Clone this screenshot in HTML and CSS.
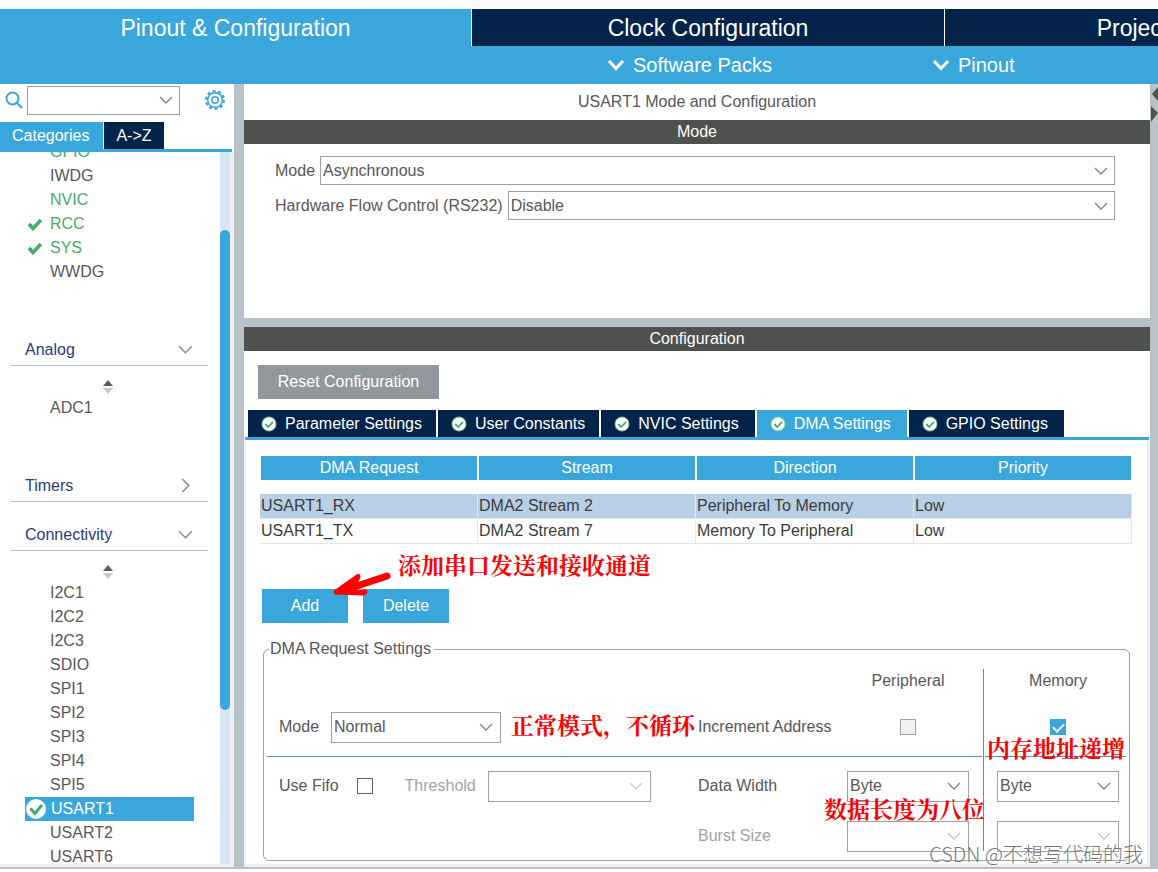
FILE: index.html
```html
<!DOCTYPE html>
<html lang="en">
<head>
<meta charset="utf-8">
<title>Pinout &amp; Configuration</title>
<link rel="stylesheet" href="styles.css">
</head>
<body>
<svg class="defs" aria-hidden="true">
  <symbol id="chev" viewBox="0 0 14 8"><path d="M1 1l6 6 6-6" fill="none" stroke="currentColor" stroke-width="1.4"/></symbol>
  <symbol id="chev-bold" viewBox="0 0 18 12"><path d="M2 2l7 7.500 7-7.500" fill="none" stroke="currentColor" stroke-width="3"/></symbol>
  <symbol id="tick" viewBox="0 0 16 14"><path d="M2 7l4 4.500L14 3" fill="none" stroke="currentColor" stroke-width="3.600"/></symbol>
  <symbol id="sort" viewBox="0 0 12 14"><path d="M1 6l5-6 5 6z" fill="#5c5c5c"/><path d="M1 8l5 6 5-6z" fill="#c9c9c9"/></symbol>
  <symbol id="ok" viewBox="0 0 16 16"><circle cx="8" cy="8" r="7" fill="#fff" stroke="#7cc79a" stroke-width="1"/><path d="M4.300 8l2.900 3 4.800-5.200" fill="none" stroke="#45ad73" stroke-width="1.800"/></symbol>
</svg>

<header class="top">
  <nav class="tabs">
    <button class="tab active">Pinout &amp; Configuration</button>
    <button class="tab">Clock Configuration</button>
    <button class="tab">Project Manager</button>
  </nav>
  <div class="menus">
    <button class="menu"><svg><use href="#chev-bold"/></svg>Software Packs</button>
    <button class="menu"><svg><use href="#chev-bold"/></svg>Pinout</button>
  </div>
</header>

<div class="workspace">
  <aside class="sidebar">
    <div class="search">
      <svg class="lens" viewBox="0 0 18 18"><circle cx="7.500" cy="7.500" r="6" fill="none" stroke="#3aa7dc" stroke-width="2"/><path d="M12 12l5 5" stroke="#3aa7dc" stroke-width="2.200"/></svg>
      <span class="select find"><select aria-label="Search"><option></option></select><svg><use href="#chev"/></svg></span>
      <button class="gear" aria-label="Settings"><svg viewBox="0 0 20 20" fill="none" stroke="#3aa7dc"><circle cx="10" cy="10" r="8.900" stroke-width="2.200" stroke-dasharray="3.200 2.392"/><circle cx="10" cy="10" r="7.300" stroke-width="1.500"/><circle cx="10" cy="10" r="3.200" stroke-width="1.600"/></svg></button>
    </div>
    <div class="side-tabs">
      <button class="side-tab active">Categories</button>
      <button class="side-tab">A-&gt;Z</button>
    </div>
    <div class="scroll">
      <div class="tree">
        <ul class="items first">
          <li class="green">GPIO</li>
          <li>IWDG</li>
          <li class="green">NVIC</li>
          <li class="green"><svg><use href="#tick"/></svg>RCC</li>
          <li class="green"><svg><use href="#tick"/></svg>SYS</li>
          <li>WWDG</li>
        </ul>
        <button class="group spaced">Analog<svg><use href="#chev"/></svg></button>
        <svg class="sort"><use href="#sort"/></svg>
        <ul class="items"><li>ADC1</li></ul>
        <button class="group spaced">Timers<svg class="closed"><use href="#chev"/></svg></button>
        <button class="group">Connectivity<svg><use href="#chev"/></svg></button>
        <svg class="sort"><use href="#sort"/></svg>
        <ul class="items">
          <li>I2C1</li><li>I2C2</li><li>I2C3</li><li>SDIO</li>
          <li>SPI1</li><li>SPI2</li><li>SPI3</li><li>SPI4</li><li>SPI5</li>
          <li class="selected"><svg viewBox="0 0 20 20"><circle cx="10" cy="10" r="10" fill="#fff"/><path d="M4.500 9.500l4.500 5 7-8.500" fill="none" stroke="#3fae6c" stroke-width="3"/></svg>USART1</li>
          <li>USART2</li><li>USART6</li>
        </ul>
      </div>
      <div class="track"><div class="thumb"></div></div>
    </div>
  </aside>

  <main class="main">
    <h1 class="title">USART1 Mode and Configuration</h1>
    <h2 class="bar">Mode</h2>
    <section class="mode">
      <div class="field"><label for="mode">Mode</label><span class="select"><select id="mode"><option>Asynchronous</option></select><svg><use href="#chev"/></svg></span></div>
      <div class="field"><label for="flow">Hardware Flow Control (RS232)</label><span class="select"><select id="flow"><option>Disable</option></select><svg><use href="#chev"/></svg></span></div>
    </section>
    <h2 class="bar second">Configuration</h2>
    <section class="config">
      <button class="reset">Reset Configuration</button>
      <nav class="cfg-tabs">
        <button class="cfg-tab"><svg><use href="#ok"/></svg>Parameter Settings</button>
        <button class="cfg-tab"><svg><use href="#ok"/></svg>User Constants</button>
        <button class="cfg-tab"><svg><use href="#ok"/></svg>NVIC Settings</button>
        <button class="cfg-tab active"><svg><use href="#ok"/></svg>DMA Settings</button>
        <button class="cfg-tab"><svg><use href="#ok"/></svg>GPIO Settings</button>
      </nav>
      <div class="pane">
        <table class="dma">
          <thead><tr><th>DMA Request</th><th>Stream</th><th>Direction</th><th>Priority</th></tr></thead>
          <tbody>
            <tr class="picked"><td>USART1_RX</td><td>DMA2 Stream 2</td><td>Peripheral To Memory</td><td>Low</td></tr>
            <tr><td>USART1_TX</td><td>DMA2 Stream 7</td><td>Memory To Peripheral</td><td>Low</td></tr>
          </tbody>
        </table>
        <div class="actions">
          <button class="action">Add</button>
          <button class="action">Delete</button>
          <svg class="arrow" viewBox="0 0 58 28"><path d="M54 6L24 16" stroke="#f00" stroke-width="7" stroke-linecap="round"/><path d="M3 22L25 6.500 20 18l3 4h9l-2 1z" fill="#f00" stroke="#f00" stroke-width="5" stroke-linejoin="round"/></svg>
          <span class="note note-add">添加串口发送和接收通道</span>
        </div>
        <fieldset class="settings">
          <legend>DMA Request Settings</legend>
          <div class="grid">
            <span class="head per">Peripheral</span>
            <span class="head mem">Memory</span>
            <div class="left r1">
              <label for="dmode">Mode</label>
              <span class="select dmode"><select id="dmode"><option>Normal</option></select><svg><use href="#chev"/></svg></span>
              <span class="note note-mode">正常模式，不循环</span>
            </div>
            <span class="name r1">Increment Address</span>
            <span class="per r1"><input type="checkbox" disabled aria-label="Increment Address, Peripheral"></span>
            <span class="mem r1"><input type="checkbox" checked aria-label="Increment Address, Memory"></span>
            <i class="line-a"></i><i class="line-b"></i><i class="line-v"></i>
            <div class="left r2">
              <label for="fifo">Use Fifo</label>
              <input type="checkbox" id="fifo">
              <label for="thr" class="off threshold">Threshold</label>
              <span class="select thr"><select id="thr" disabled><option></option></select><svg><use href="#chev"/></svg></span>
            </div>
            <span class="name r2">Data Width</span>
            <span class="select per r2"><select aria-label="Data Width, Peripheral"><option>Byte</option></select><svg><use href="#chev"/></svg></span>
            <span class="select mem r2"><select aria-label="Data Width, Memory"><option>Byte</option></select><svg><use href="#chev"/></svg></span>
            <span class="name r3 off">Burst Size</span>
            <span class="select per r3"><select disabled aria-label="Burst Size, Peripheral"><option></option></select><svg><use href="#chev"/></svg></span>
            <span class="select mem r3"><select disabled aria-label="Burst Size, Memory"><option></option></select><svg><use href="#chev"/></svg></span>
            <span class="note note-mem">内存地址递增</span>
            <span class="note note-width">数据长度为八位</span>
          </div>
        </fieldset>
      </div>
    </section>
  </main>
  <div class="gutter"><svg viewBox="0 0 8 40"><path d="M8 3L2 10l6 7zM1 22l7 7-7 9z" fill="#505250"/></svg></div>
  <span class="watermark">CSDN @不想写代码的我</span>
</div>
</body>
</html>
```
FILE: styles.css
```css
* { box-sizing: border-box; }
body {
  margin: 0;
  padding: 9px 0 3px;
  background: #fdfdfd;
  color: #58585a;
  font: 16px/24px "Liberation Sans", Arial, "Noto Sans CJK SC", sans-serif;
  overflow-x: hidden;
}
button, select { font: inherit; color: inherit; }
button { border: 0; padding: 0; background: none; white-space: nowrap; }
ul { list-style: none; margin: 0; padding: 0; }
h1, h2 { margin: 0; font-size: 16px; font-weight: 400; text-align: center; }
.defs { display: none; }

.top { background: #3aa7dc; color: #fff; overflow: hidden; }
.tabs { display: flex; height: 37px; }
.tab { flex: 0 0 473px; background: #03234b; font-size: 23px; border-left: 1px solid #fff; }
.tab.active { flex-basis: 471px; background: none; border: 0; }
.menus { display: flex; height: 38px; padding-left: 607px; gap: 160px; font-size: 20px; }
.menu { display: flex; align-items: center; gap: 8px; }
.menu svg { width: 18px; height: 12px; }

.workspace {
  position: relative;
  display: grid;
  grid-template-columns: 234px minmax(0, 1fr) 8px;
  background: #b8c3c9;
  border-bottom: 2px solid #b8c3c9;
}

.sidebar { display: flex; flex-direction: column; background: #fff; border-bottom: 3px solid #edeff2; }
.search { display: flex; align-items: center; height: 38px; padding: 0 9px 6px 5px; }
.lens { width: 18px; height: 18px; margin-right: 4px; }
.find { width: 153px; height: 30px; }
.gear { width: 20px; height: 20px; margin-left: auto; line-height: 0; }
.side-tabs { display: flex; gap: 1px; height: 30px; margin-right: 2px; border-bottom: 3px solid #3aa7dc; }
.side-tab { background: #03234b; color: #fff; padding: 0 12px; }
.side-tab.active { background: #3aa7dc; padding: 0 14px 0 12px; }
.scroll { display: flex; flex: 1 1 0; min-height: 0; overflow: hidden; border-right: 4px solid #edeff2; }
.tree { flex: 1; height: 0; padding-right: 12px; }
.items.first { margin-top: -12px; }
.items li { display: flex; align-items: center; height: 24px; margin: 0 14px 0 25px; padding-left: 25px; }
.items svg { width: 16px; height: 14px; margin: 0 7px 0 -23px; }
.items .green { color: #45ad6c; }
.items .selected { background: #3aa7dc; color: #fff; }
.items .selected svg { width: 20px; height: 20px; margin: 0 5px 0 -24px; }
.group {
  display: flex;
  align-items: center;
  justify-content: space-between;
  width: 197px;
  height: 32px;
  margin: 17px 0 0 11px;
  padding: 0 15px 0 14px;
  border-bottom: 1px solid #b8c3c9;
  color: #2b3b7c;
}
.group.spaced { margin-top: 50px; }
.group svg { width: 15px; height: 9px; color: #8b8b8b; }
.group svg.closed { transform: rotate(-90deg); }
.sort { display: block; width: 12px; height: 14px; margin: 14px auto 2px 102px; }
.track { width: 10px; background: #d9e8f6; padding-top: 78px; }
.thumb { height: 480px; border-radius: 5px; background: #3aa7dc; }

.main { margin-left: 10px; background: #fff; }
.title { line-height: 36px; }
.bar { height: 24px; background: #4f514f; color: #fff; }
.bar.second { border-top: 9px solid #b8c3c9; height: 33px; }
.mode { min-height: 174px; padding: 12px 35px 0 31px; }
.field { display: flex; align-items: center; gap: 5px; margin-bottom: 6px; }
.field .select { flex: 1; }

.select { position: relative; display: block; height: 29px; }
.select select {
  display: block;
  width: 100%;
  height: 100%;
  padding: 0 24px 0 2px;
  appearance: none;
  border: 1px solid #9aa1a7;
  border-radius: 0;
  background: #fff;
}
.select svg { position: absolute; right: 7px; top: 50%; width: 14px; height: 8px; margin-top: -4px; color: #858585; pointer-events: none; }
.select select:disabled { opacity: 1; }
.select select:disabled + svg { color: #c8c8c8; }

.config { padding-top: 14px; }
.reset { display: block; width: 181px; height: 34px; margin-left: 14px; background: #91979d; color: #fff; }
.cfg-tabs { display: flex; gap: 2px; height: 30px; margin: 11px 1px 0; padding-left: 3px; border-bottom: 3px solid #3aa7dc; }
.cfg-tab { display: flex; align-items: center; gap: 8px; padding: 0 14px 0 13px; background: #03234b; color: #fff; }
.cfg-tab:nth-child(n+3) { padding-right: 16px; }
.cfg-tab.active { background: #3aa7dc; }
.cfg-tab svg { width: 16px; height: 16px; }
.pane { padding: 16px 15px 3px 14px; border: solid #edeff2; border-width: 0 3px 3px 2px; }

.dma { width: 100%; table-layout: fixed; border-collapse: separate; border-spacing: 0; color: #3c3c3c; }
.dma th { height: 24px; padding: 0; background: #3aa7dc; background-clip: padding-box; color: #fff; font-weight: 400; border: solid #fff; border-width: 0 1px; }
.dma thead::after { content: ""; display: block; height: 14px; }
.dma td { height: 25px; padding: 0 1px; border: solid #e4e7ea; border-width: 0 1px 1px 0; line-height: 24px; }
.dma .picked { background: #b8cfe6; }
.actions { position: relative; display: flex; gap: 15px; margin: 45px 2px 0; }
.action { width: 86px; height: 34px; background: #3aa7dc; color: #fff; }
.arrow { position: absolute; left: 71px; top: -19px; width: 58px; height: 28px; }
.note { position: absolute; color: #f00; font: 700 23px/28px "Noto Serif CJK SC", "Noto Sans CJK SC", serif; white-space: nowrap; }
.note-add { left: 136px; top: -38px; }

.settings { min-width: 0; margin: 16px 2px 0 3px; padding: 10px 10px 3px 15px; border: 1px solid #9aa1a7; border-radius: 6px; }
.settings legend { margin-left: -10px; padding: 0 3px 0 1px; line-height: 20px; }
.grid {
  position: relative;
  display: grid;
  grid-template-columns: minmax(0, 1fr) 149px 122px 28px 122px;
  grid-template-rows: 29px 58px 1px 58px 42px;
  align-items: center;
}
.head { align-self: start; justify-self: center; grid-row: 1; }
.left { display: flex; align-items: center; grid-column: 1; }
.name { grid-column: 2; }
.per { grid-column: 3; }
.mem { grid-column: 5; }
.r1 { grid-row: 2; }
.r2 { grid-row: 4; }
.r3 { grid-row: 5; }
.grid .select { height: 31px; }
.grid .select svg { right: 8px; }
span.r1:not(.name) { justify-self: center; line-height: 0; }
.dmode { width: 170px; margin-left: 12px; }
.thr { width: 163px; margin-left: 12px; }
.threshold { margin-left: 32px; }
.off { color: #a3a3a5; }
.line-a, .line-b { grid-row: 3; height: 1px; background: #5f86d0; }
.line-a { grid-column: 1 / 4; margin: 0 -13px 0 -12px; }
.line-b { grid-column: 5; margin: 0 -7px 0 -12px; }
.line-v { grid-area: 1 / 4 / 6 / 5; align-self: stretch; justify-self: center; width: 1px; margin-bottom: 6px; background: #5f86d0; }
.note-mode { left: 232px; top: 42px; }
.note-mem { right: -6px; top: 65px; }
.note-width { right: 134px; top: 126px; }

input[type="checkbox"] { appearance: none; width: 16px; height: 16px; margin: 0; border: 1px solid #606468; background: #fff; }
input[type="checkbox"]:disabled { border-color: #9aa1a7; background: #eef0f2; }
input[type="checkbox"]:checked { position: relative; border-color: #3aa7dc; background: #3aa7dc; }
input[type="checkbox"]:checked::after { content: ""; position: absolute; left: 4px; top: 1px; width: 5px; height: 9px; border: solid #fff; border-width: 0 2px 2px 0; transform: rotate(45deg); }
#fifo { margin-left: 18px; }

.gutter svg { display: block; width: 8px; height: 40px; }
.watermark { position: absolute; right: 15px; bottom: 0; color: #77777a; font: 300 20px/26px "Noto Sans CJK SC", sans-serif; text-shadow: 0 0 2px #fff; }
```
